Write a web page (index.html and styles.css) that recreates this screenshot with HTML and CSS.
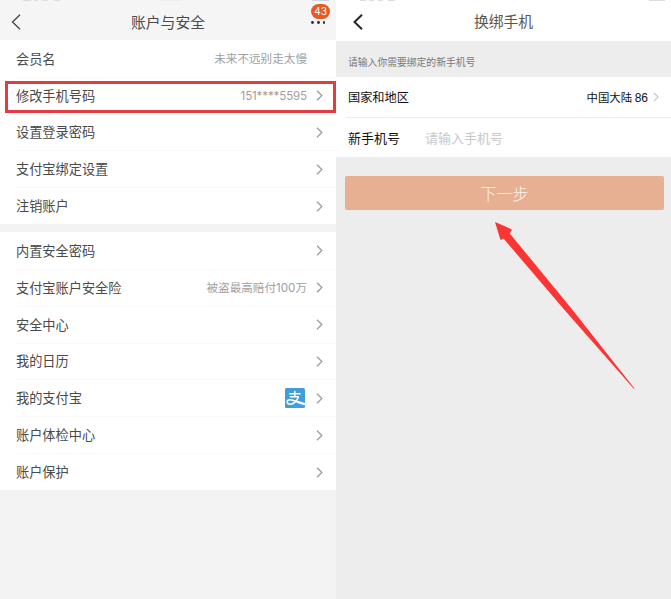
FILE: index.html
```html
<!DOCTYPE html>
<html lang="zh-CN">
<head>
<meta charset="utf-8">
<title>账户与安全</title>
<link rel="stylesheet" href="styles.css">
</head>
<body>
<svg class="defs" width="0" height="0"><symbol id="chev" viewBox="0 0 7 11"><path d="M1 .8L5.8 5.5L1 10.2" fill="none" stroke="currentColor" stroke-width="1.2"/></symbol></svg>
<main class="screens">
  <section class="screen account">
    <header class="bar">
      <svg class="back" viewBox="0 0 10 16"><path d="M9 .8L1.5 8L9 15.2" fill="none" stroke="#444" stroke-width="1.3"/></svg>
      <h1>账户与安全</h1>
      <div class="more"><i></i><i></i><i></i><b class="badge">43</b></div>
      <svg class="status" viewBox="0 0 336 2"><path d="M23 .5h8m3 0h4m4 0h6m6 0h6" stroke="#ddd"/><path d="M160 .5h22" stroke="#eee"/><path d="M312 .5h17" stroke="#ccd6de"/></svg>
    </header>
    <ul class="list five">
      <li><span>会员名</span><em class="plain">未来不远别走太慢</em></li>
      <li class="marked"><span>修改手机号码</span><em class="phone">151****5595</em><svg class="chev"><use href="#chev"/></svg></li>
      <li><span>设置登录密码</span><svg class="chev"><use href="#chev"/></svg></li>
      <li><span>支付宝绑定设置</span><svg class="chev"><use href="#chev"/></svg></li>
      <li><span>注销账户</span><svg class="chev"><use href="#chev"/></svg></li>
    </ul>
    <ul class="list seven">
      <li><span>内置安全密码</span><svg class="chev"><use href="#chev"/></svg></li>
      <li><span>支付宝账户安全险</span><em>被盗最高赔付100万</em><svg class="chev"><use href="#chev"/></svg></li>
      <li><span>安全中心</span><svg class="chev"><use href="#chev"/></svg></li>
      <li><span>我的日历</span><svg class="chev"><use href="#chev"/></svg></li>
      <li><span>我的支付宝</span>
        <svg class="alipay" viewBox="0 0 20 20"><rect width="20" height="20" rx="1.5" fill="#429edb"/><g fill="none" stroke="#fff" stroke-linecap="round" stroke-linejoin="round"><path d="M4.8 5.8H15M9.8 3.4V8.8M5.4 8.8H13.4C12.5 12.4 8.8 16.2 5.2 16.2C1.2 16.2 1.2 12 4.8 11.8C8.5 11.6 12.5 14.4 19.2 16.2" stroke-width="1.5"/><path d="M13 14L19.3 16" stroke-width="2"/></g></svg>
        <svg class="chev"><use href="#chev"/></svg></li>
      <li><span>账户体检中心</span><svg class="chev"><use href="#chev"/></svg></li>
      <li><span>账户保护</span><svg class="chev"><use href="#chev"/></svg></li>
    </ul>
  </section>
  <section class="screen rebind">
    <header class="bar">
      <svg class="back" viewBox="0 0 10 16"><path d="M9 .8L1.5 8L9 15.2" fill="none" stroke="#222" stroke-width="1.9"/></svg>
      <h1>换绑手机</h1>
      <svg class="status" viewBox="0 0 335 2"><path d="M24 .5h6m3 0h5m4 0h5m5 0h7" stroke="#ddd"/><path d="M313 .5h16" stroke="#ddd"/></svg>
    </header>
    <p class="notice">请输入你需要绑定的新手机号</p>
    <div class="field country"><span>国家和地区</span><strong>中国大陆 <span class="code">86</span></strong><svg class="chev"><use href="#chev"/></svg></div>
    <div class="field number"><span>新手机号</span><span class="placeholder">请输入手机号</span></div>
    <button class="next">下一步</button>
    <svg class="arrow" viewBox="0 0 140 168"><path d="M0 0L17 7.5L14.8 11.5L76 86L139.5 166.5L139 167L70 88.5L8.5 16.5L5.5 18Z" fill="#fb3434"/></svg>
  </section>
</main>
</body>
</html>
```
FILE: styles.css
```css
*, *::before, *::after { box-sizing: border-box; }
body {
  margin: 0;
  font-family: "Noto Sans CJK SC", sans-serif;
  color: #4a4a4a;
}
.defs { position: absolute; }
.screens {
  display: grid;
  grid-template-columns: 336px 335px;
  height: 599px;
  overflow: hidden;
}
.screen { position: relative; min-width: 0; }
.account { background: #f3f3f3; }
.rebind { background: #ededed; }
.bar {
  position: relative;
  display: flex;
  align-items: center;
  justify-content: center;
  height: 40px;
  padding-top: 4px;
}
.account .bar { background: #f5f5f5; }
.rebind .bar { background: #fff; height: 41px; padding-top: 1px; }
.bar h1 {
  margin: 0;
  font-size: 14.8px;
  font-weight: 400;
  line-height: 20px;
}
.rebind h1 { color: #5c574c; }
.back {
  position: absolute;
  left: 11px;
  top: 14px;
  width: 10px;
  height: 16px;
}
.rebind .back { left: 17px; }
.status { position: absolute; left: 0; top: 0; width: 100%; height: 2px; }
.more {
  position: absolute;
  left: 311px;
  top: 21px;
  display: flex;
  gap: 3px;
}
.more i {
  width: 2.8px;
  height: 2.8px;
  border-radius: 50%;
  background: #333;
}
.badge {
  position: absolute;
  left: 0;
  top: -17px;
  width: 19px;
  height: 15px;
  border-radius: 8px;
  background: #e85a24;
  color: #fff;
  font: 400 10px/15px Inter, sans-serif;
  text-align: center;
}
.list {
  display: grid;
  margin: 0;
  padding: 0;
  list-style: none;
  background: #fff;
}
.five { height: 184px; grid-template-rows: repeat(5, 1fr); }
.seven { height: 258px; grid-template-rows: repeat(7, 1fr); margin-top: 8px; }
.list li {
  position: relative;
  display: flex;
  align-items: center;
  padding: 1px 13px 0 16px;
  font-size: 13.2px;
  line-height: 18px;
}
.list li + li { background: linear-gradient(#f9f9f9, #f9f9f9) 16px 0 / 100% 1px no-repeat; }
.list em {
  margin-left: auto;
  font: 400 11.6px/18px Inter, "Noto Sans CJK SC", sans-serif;
  color: #a0a0a0;
}
.list em.plain { margin-right: 16px; }
.list em.phone { letter-spacing: -.15px; }
.chev { width: 7px; height: 11px; color: #999; margin-left: auto; }
em + .chev, strong + .chev { margin-left: 9px; }
.alipay { width: 20px; height: 20px; margin-left: auto; }
.list .alipay + .chev { margin-left: 11px; }
.marked::after {
  content: "";
  position: absolute;
  left: 5px;
  right: 0;
  top: 4px;
  height: 32px;
  border: 3px solid #e33b3f;
}
.notice {
  height: 36px;
  margin: 0;
  padding: 7px 12px 0;
  font-size: 9.8px;
  line-height: 29px;
  color: #777;
}
.field {
  display: flex;
  align-items: center;
  background: #fff;
  color: #111;
  font-weight: 400;
}
.country { height: 40px; padding: 0 12px; font-size: 12.2px; }
.country strong { margin-left: auto; font-size: 11.4px; font-weight: 400; }
.code { font-family: "Liberation Sans", sans-serif; font-size: 12px; }
.country .chev { width: 6px; height: 10px; margin-left: 5px; color: #bbb; }
.number {
  height: 40px;
  padding: 0 12px;
  font-size: 13px;
  background: #fff linear-gradient(#eee, #eee) 10px 0 / 100% 1px no-repeat;
}
.placeholder { margin-left: 25px; color: #c8c8c8; font-weight: 400; }
.next {
  display: block;
  width: 319px;
  height: 34px;
  margin: 19px 0 0 9px;
  padding: 0;
  border: 0;
  border-radius: 2px;
  background: #e8b092;
  color: #fff4ec;
  font: 300 16px/33px "Noto Sans CJK SC", sans-serif;
}
.arrow {
  position: absolute;
  left: 159px;
  top: 222px;
  width: 140px;
  height: 168px;
}
```
